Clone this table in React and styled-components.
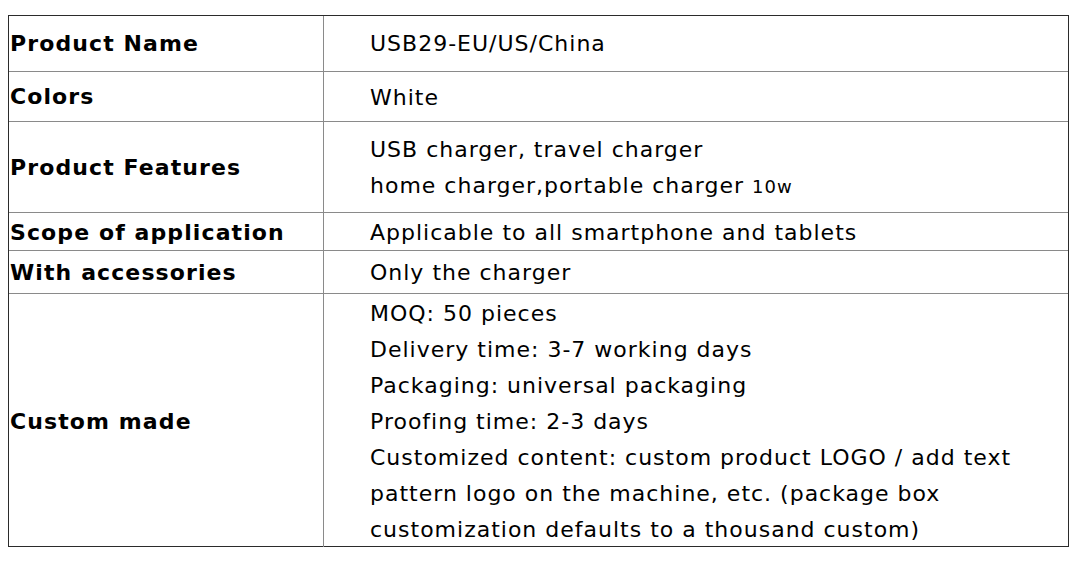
import React from 'react';
import styled, { createGlobalStyle } from 'styled-components';

const GlobalStyle = createGlobalStyle`
    body {
        margin: 0;
        background: #ffffff;
        font-family: "DejaVu Sans", Verdana, sans-serif;
        color: #000000;
    }
`;

const SpecTable = styled.div`
    box-sizing: border-box;
    width: 1061px;
    margin: 15px 0 0 8px;
    border: 1px solid #2b2b2b;
`;

const Row = styled.div`
    box-sizing: border-box;
    display: grid;
    grid-template-columns: 315px 1fr;
    height: ${props => props.height}px;
    border-top: ${props => props.first ? 'none' : '1px solid #8a8a8a'};
`;

const Label = styled.div`
    box-sizing: border-box;
    display: flex;
    align-items: center;
    padding-left: 1px;
    border-right: 1px solid #8a8a8a;
    font-size: 22px;
    font-weight: bold;
    letter-spacing: 1.1px;
`;

const Value = styled.div`
    display: flex;
    flex-direction: column;
    justify-content: center;
    padding-left: 46px;
    padding-top: ${props => props.first ? 0 : 2}px;
    font-size: 22px;
    line-height: 36px;
    letter-spacing: 1px;
`;

const Small = styled.span`
    font-size: 18px;
`;

const rows = [
    {label: 'Product Name', height: 55, lines: ['USB29-EU/US/China']},
    {label: 'Colors', height: 50, lines: ['White']},
    {label: 'Product Features', height: 91, lines: [
        'USB charger, travel charger',
        <>home charger,portable charger <Small>10w</Small></>
    ]},
    {label: 'Scope of application', height: 38, lines: ['Applicable to all smartphone and tablets']},
    {label: 'With accessories', height: 43, lines: ['Only the charger']},
    {label: 'Custom made', height: 253, lines: [
        'MOQ: 50 pieces',
        'Delivery time: 3-7 working days',
        'Packaging: universal packaging',
        'Proofing time: 2-3 days',
        'Customized content: custom product LOGO / add text',
        'pattern logo on the machine, etc. (package box',
        'customization defaults to a thousand custom)'
    ]}
];

const App = () => {

    const list = rows.map(function (item, i) {
        return <Row key={item.label} height={item.height} first={i === 0}>
            <Label>{item.label}</Label>
            <Value first={i === 0}>
                {item.lines.map((line, j) => <div key={j}>{line}</div>)}
            </Value>
        </Row>;
    });

    return (
        <>
            <GlobalStyle/>
            <SpecTable>
                {list}
            </SpecTable>
        </>
    )

};

export default App;
